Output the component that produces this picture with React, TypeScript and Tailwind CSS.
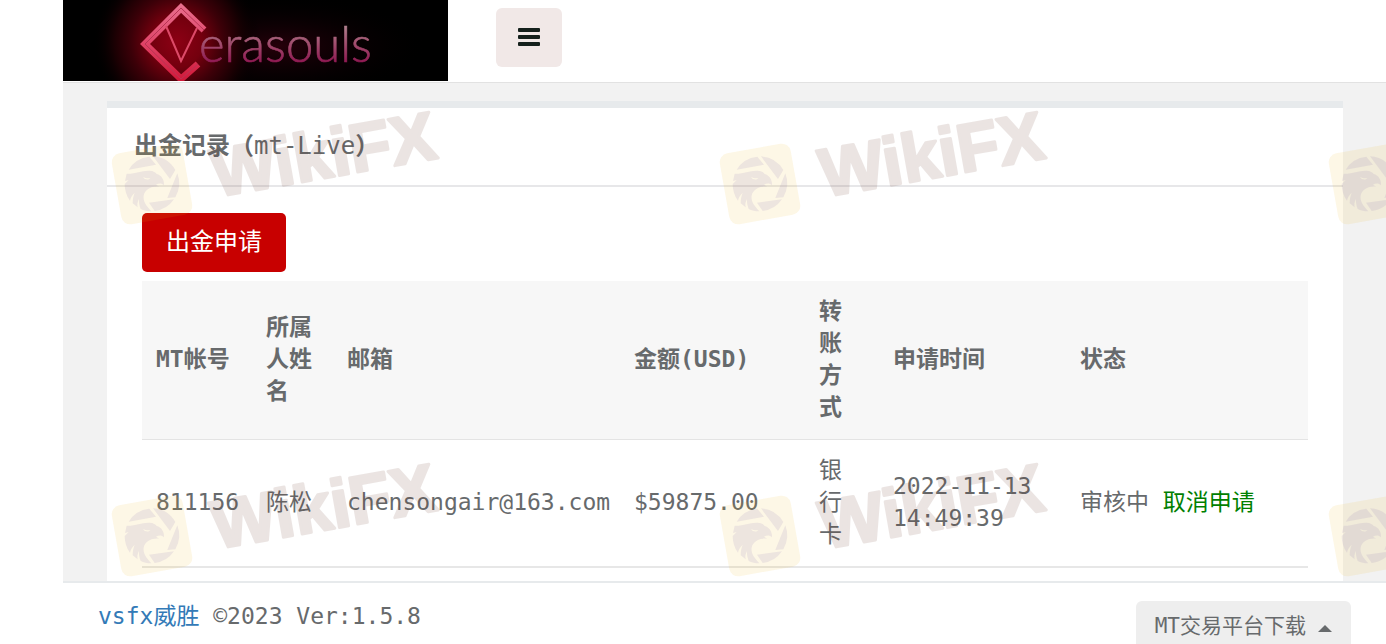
import { Fragment } from 'react';

const columns = [
  { label: 'MT帐号', width: 'w-[110px]' },
  { label: '所属人姓名', width: 'w-[81px]' },
  { label: '邮箱', width: 'w-[287px]' },
  { label: '金额(USD)', width: 'w-[185px]' },
  { label: '转账方式', width: 'w-[74px]' },
  { label: '申请时间', width: 'w-[187px]' },
  { label: '状态', width: '' },
];

const marks = [
  { x: 760, y: 184, word: true },
  { x: 152, y: 184, word: true },
  { x: 1369, y: 184, word: false },
  { x: 760, y: 536, word: true },
  { x: 152, y: 536, word: true },
  { x: 1369, y: 536, word: false },
];

function Logo() {
  return (
    <svg className="block h-[81px] w-[385px] shrink-0 bg-black" viewBox="0 0 385 81" role="img" aria-label="Verasouls">
      <defs>
        <radialGradient id="glow" gradientUnits="userSpaceOnUse" cx="114" cy="42" r="84">
          <stop offset="0" stopColor="#8c0014" />
          <stop offset="0.3" stopColor="#74000e" />
          <stop offset="0.55" stopColor="#3c0008" />
          <stop offset="0.75" stopColor="#1a0003" />
          <stop offset="1" stopColor="#000" stopOpacity="0" />
        </radialGradient>
        <radialGradient id="textGlow">
          <stop offset="0" stopColor="#26000a" />
          <stop offset="1" stopColor="#000" stopOpacity="0" />
        </radialGradient>
        <linearGradient id="band" gradientUnits="userSpaceOnUse" x1="0" y1="4" x2="0" y2="81">
          <stop offset="0" stopColor="#e8708e" />
          <stop offset="0.5" stopColor="#e04468" />
          <stop offset="1" stopColor="#d01838" />
        </linearGradient>
        <linearGradient id="word" gradientUnits="userSpaceOnUse" x1="0" y1="26" x2="0" y2="64">
          <stop offset="0" stopColor="#b0808e" />
          <stop offset="0.5" stopColor="#a04a6c" />
          <stop offset="1" stopColor="#8e1450" />
        </linearGradient>
      </defs>
      <ellipse cx="215" cy="46" rx="150" ry="52" fill="url(#textGlow)" />
      <circle cx="114" cy="42" r="84" fill="url(#glow)" />
      <g fill="none">
        <path d="M141 30 118 8 82 44 118 79 135 64" stroke="url(#band)" strokeWidth="7" />
        <path d="M141 30 118 8 82 44 118 79 135 64" stroke="#b83454" strokeWidth="1" />
        <path d="M103 26 118 61 134 28" stroke="#dc4a68" strokeWidth="2" />
      </g>
      <text
        x="136"
        y="62"
        fill="url(#word)"
        stroke="url(#word)"
        strokeWidth="0.6"
        className="font-['Lato',sans-serif] text-[49px] font-light"
      >
        erasouls
      </text>
    </svg>
  );
}

function Watermark() {
  return (
    <svg className="pointer-events-none absolute top-0 left-0 h-full w-full" aria-hidden="true">
      {marks.map((m) => (
        <g key={`${m.x}-${m.y}`} transform={`translate(${m.x} ${m.y})`}>
          <rect x="-36" y="-36" width="72" height="72" rx="9" transform="rotate(-10)" fill="#ebaf05" fillOpacity="0.1" />
          <g fill="#7a62b0" fillOpacity="0.12" transform="scale(0.333)">
            <path d="M-70 -43 12 -58 -8 -82A82 82 0 0 0 -70 -43Z" />
            <path d="M3 -83 54 -15 70 -42A82 82 0 0 0 3 -83Z" />
            <path d="M76 -32 46 42 70 40A82 82 0 0 0 76 -32Z" />
            <path d="M-9 56 66 46A82 82 0 0 1 8 81Z" />
            <path
              fillRule="evenodd"
              d="M-76 -31C-48 -30 -32 -41 -8 -40C4 -40 12 -34 14 -30C28 -26 37 -14 36 4C30 -3 20 -3 12 2L22 8C2 5 -20 14 -25 34C-28 52 -17 66 -2 82C-14 82 -25 80 -34 75C-38 64 -40 54 -39 44C-44 54 -45 62 -43 70L-58 58C-58 46 -56 36 -52 26C-60 34 -65 42 -66 50C-77 36 -82 18 -82 0L-70 -12L-81 -9ZM-27 -21C-22 -12 -10 -11 -5 -18C-12 -16 -20 -18 -27 -21Z"
            />
          </g>
          {m.word && (
            <text
              x="61"
              y="24"
              transform="rotate(-10)"
              className="font-['Liberation_Sans',sans-serif] text-[68px] font-bold"
              fill="#5f2d1e"
              stroke="#5f2d1e"
              strokeWidth="3"
              strokeLinejoin="round"
              opacity="0.12"
            >
              WikiFX
            </text>
          )}
        </g>
      ))}
    </svg>
  );
}

export default function App() {
  return (
    <div className="relative flex min-h-screen flex-col overflow-hidden bg-white pl-[63px] font-['DejaVu_Sans_Mono','Noto_Sans_CJK_SC',monospace] text-[23px] leading-8 text-[#676a6c]">
      <header className="flex border-b border-[#e2e2e2] bg-white pb-px">
        <Logo />
        <button
          type="button"
          aria-label="菜单"
          className="mt-2 ml-12 flex h-[59px] w-[66px] items-center justify-center rounded-md bg-[#f1e8e7] text-[#15201c]"
        >
          <svg className="h-5 w-[22px]" viewBox="0 0 22 20" fill="currentColor">
            <rect x="0" y="0" width="22" height="4" rx="1" />
            <rect x="0" y="7" width="22" height="4" rx="1" />
            <rect x="0" y="14" width="22" height="4" rx="1" />
          </svg>
        </button>
      </header>

      <main className="flex flex-1 flex-col bg-[#f2f2f2] pt-[18px] pr-[43px] pl-11">
        <section className="flex-1 border-t-[7px] border-[#e7eaec] bg-white pb-3">
          <h5 className="border-b-2 border-[#e7e7e9] px-[27px] pt-[22px] pb-[23px] text-2xl font-semibold">
            出金记录（<span className="font-normal">mt-Live</span>）
          </h5>
          <div className="px-[35px] pt-[26px]">
            <button type="button" className="h-[59px] rounded-[5px] bg-[#c80000] px-6 pb-[2px] text-2xl text-white">
              出金申请
            </button>
            <table className="mt-[9px] w-full table-fixed border-collapse text-left">
              <thead>
                <tr className="border-b border-[#e4e4e4] bg-[#f7f7f7]">
                  {columns.map((c) => (
                    <th key={c.label} scope="col" className={`px-[14px] pt-[14px] pb-4 align-middle font-semibold ${c.width}`}>
                      {c.label === '转账方式'
                        ? c.label.split('').map((ch) => (
                            <Fragment key={ch}>
                              {ch}
                              <br />
                            </Fragment>
                          ))
                        : c.label}
                    </th>
                  ))}
                </tr>
              </thead>
              <tbody>
                <tr className="border-b-2 border-[#e7e7e7]">
                  <td className="px-[14px] pt-[14px] pb-4 whitespace-nowrap">811156</td>
                  <td className="px-[14px] pt-[14px] pb-4">陈松</td>
                  <td className="px-[14px] pt-[14px] pb-4 whitespace-nowrap">chensongair@163.com</td>
                  <td className="px-[14px] pt-[14px] pb-4">$59875.00</td>
                  <td className="px-[14px] pt-[14px] pb-4">
                    银
                    <br />
                    行
                    <br />卡
                  </td>
                  <td className="px-[14px] pt-[14px] pb-4">
                    2022-11-13
                    <br />
                    14:49:39
                  </td>
                  <td className="px-[14px] pt-[14px] pb-4 whitespace-nowrap">
                    审核中{' '}
                    <a href="#cancel" className="text-[#008000]">
                      取消申请
                    </a>
                  </td>
                </tr>
              </tbody>
            </table>
          </div>
        </section>
      </main>

      <footer className="flex h-[63px] items-start justify-between border-t-2 border-[#e7eaec] bg-white pr-[35px] pl-[35px]">
        <p className="pt-[17px]">
          <a href="#home" className="text-[#337ab7]">
            vsfx威胜
          </a>{' '}
          ©2023 Ver:1.5.8
        </p>
        <button
          type="button"
          className="mt-[18px] flex h-[50px] items-center gap-3 rounded-md bg-[#eeeeee] px-[19px] text-[21px]"
        >
          MT交易平台下载
          <svg className="mt-1 h-[7px] w-[14px]" viewBox="0 0 14 7" fill="currentColor">
            <path d="M7 0 14 7H0Z" />
          </svg>
        </button>
      </footer>

      <Watermark />
    </div>
  );
}
